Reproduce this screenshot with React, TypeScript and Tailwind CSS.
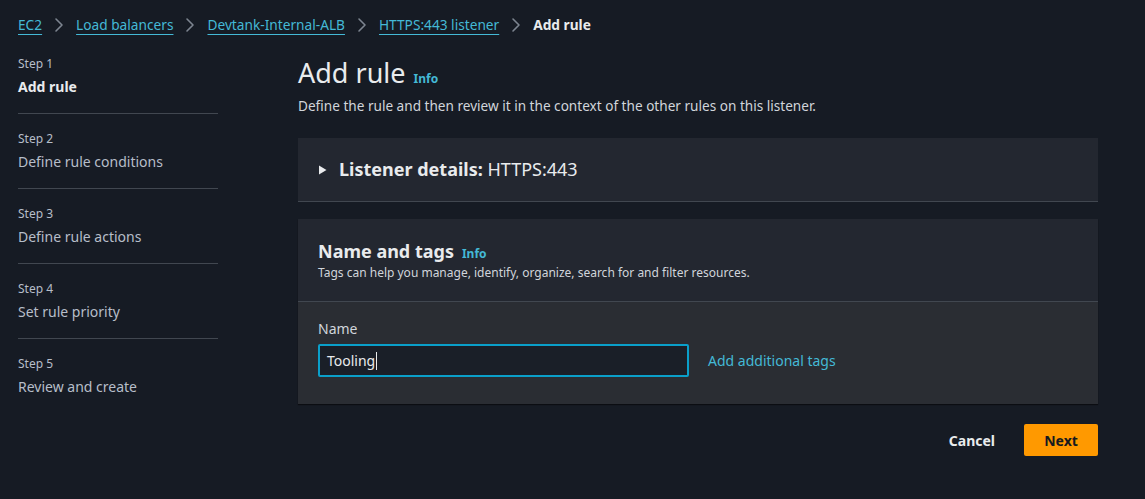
import React from "react";

const Chevron = () => (
  <svg width="10" height="16" viewBox="0 0 10 16" className="mx-[12px]" fill="none">
    <path d="M2 2l6 6-6 6" stroke="#7d8590" strokeWidth="1.6" strokeLinecap="round" strokeLinejoin="round" />
  </svg>
);

const crumbs = ["EC2", "Load balancers", "Devtank-Internal-ALB", "HTTPS:443 listener"];

const steps = [
  { n: 1, label: "Add rule", active: true },
  { n: 2, label: "Define rule conditions" },
  { n: 3, label: "Define rule actions" },
  { n: 4, label: "Set rule priority" },
  { n: 5, label: "Review and create" },
];

export default function App() {
  return (
    <div
      className="w-[1145px] h-[499px] bg-[#161b24] text-[#d1d5db] overflow-hidden"
      style={{ fontFamily: '"Noto Sans", "Open Sans", sans-serif' }}
    >
      <nav className="flex items-center pl-[18px] pt-[14px] h-[22px] box-content text-[13.7px]">
        {crumbs.map((c) => (
          <React.Fragment key={c}>
            <span className="text-[#44b9d6] underline underline-offset-[4px] decoration-1">{c}</span>
            <Chevron />
          </React.Fragment>
        ))}
        <span className="font-bold text-[#e9ebed]">Add rule</span>
      </nav>

      <div className="flex pl-[18px] pt-[20px]">
        <aside className="w-[200px] shrink-0">
          {steps.map((s, i) => (
            <div key={s.n}>
              <div className="text-[12px] leading-[16px] text-[#b6bec9]">Step {s.n}</div>
              <div
                className={
                  "text-[14px] leading-[20px] mt-[5px] " +
                  (s.active ? "font-bold text-[#e9ebed]" : "text-[#b6bec9]")
                }
              >
                {s.label}
              </div>
              {i < steps.length - 1 && <div className="h-px bg-[#414750] mt-[16px] mb-[17px]" />}
            </div>
          ))}
        </aside>

        <main className="ml-[80px] w-[800px]">
          <div className="flex items-baseline mt-[-1px]">
            <h1 className="text-[27px] leading-[36px] text-[#e9ebed]">Add rule</h1>
            <span className="ml-[8px] text-[12px] font-bold text-[#44b9d6]">Info</span>
          </div>
          <p className="text-[13.6px] leading-[20px] text-[#d1d5db] mt-[5px]">
            Define the rule and then review it in the context of the other rules on this listener.
          </p>

          <section className="mt-[22px] h-[64px] bg-[#232730] border-b border-[#414750] flex items-center pl-[20px]">
            <svg width="9" height="10" viewBox="0 0 9 10" className="mr-[12px]">
              <path d="M1 0.5 L8.5 5 L1 9.5 Z" fill="#e9ebed" />
            </svg>
            <span className="text-[18px] text-[#e9ebed]">
              <span className="font-bold">Listener details:</span> HTTPS:443
            </span>
          </section>

          <section className="mt-[17px] bg-[#2a2d33] shadow-[0_1px_1px_rgba(0,0,0,0.5)]">
            <div className="bg-[#232730] px-[20px] pt-[19px] pb-[20px] border-b border-[#414750]">
              <div className="flex items-baseline">
                <h2 className="text-[18px] leading-[26px] font-bold text-[#e9ebed]">Name and tags</h2>
                <span className="ml-[8px] text-[12px] font-bold text-[#44b9d6]">Info</span>
              </div>
              <p className="text-[12px] leading-[16px] text-[#d1d5db] mt-[1px]">
                Tags can help you manage, identify, organize, search for and filter resources.
              </p>
            </div>
            <div className="px-[20px] pt-[17px] pb-[27px]">
              <div className="text-[14px] leading-[20px] text-[#d1d5db]">Name</div>
              <div className="flex items-center mt-[5px]">
                <div className="w-[371px] h-[33px] border-2 border-[#0a9fca] rounded-[2px] bg-[#1a1f28] flex items-center pl-[7px] text-[14px] text-[#e9ebed]">
                  Tooling
                  <span className="inline-block w-px h-[18px] bg-[#e9ebed] ml-px" />
                </div>
                <span className="ml-[19px] text-[14px] text-[#44b9d6]">Add additional tags</span>
              </div>
            </div>
          </section>

          <div className="flex justify-end items-center mt-[20px]">
            <span className="text-[14px] font-bold text-[#e9ebed] mr-[29px]">Cancel</span>
            <button className="w-[74px] h-[32px] bg-[#ff9900] rounded-[2px] text-[14px] font-bold text-[#16191f]">
              Next
            </button>
          </div>
        </main>
      </div>
    </div>
  );
}
